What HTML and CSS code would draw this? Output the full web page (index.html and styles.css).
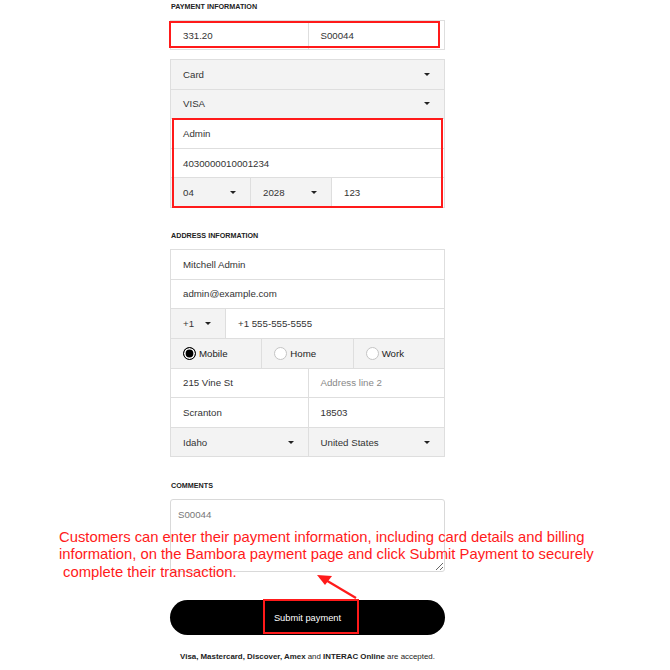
FILE: index.html
```html
<!DOCTYPE html>
<html lang="en">
<head>
<meta charset="utf-8">
<title>Bambora payment</title>
<link rel="stylesheet" href="styles.css">
</head>
<body>
<main class="page">
  <span class="stray-note">ing</span>

  <h6 class="section-title">PAYMENT INFORMATION</h6>
  <div class="group amount-group">
    <div class="row">
      <div class="cell half">331.20</div>
      <div class="cell half">S00044</div>
    </div>
    <span class="hl hl-amount"></span>
  </div>

  <div class="group card-group">
    <div class="row grey">
      <div class="cell select">Card<i class="caret"></i></div>
    </div>
    <div class="row grey">
      <div class="cell select">VISA<i class="caret"></i></div>
    </div>
    <div class="card-details">
      <div class="row">
        <div class="cell">Admin</div>
      </div>
      <div class="row">
        <div class="cell">4030000010001234</div>
      </div>
      <div class="row">
        <div class="cell select grey exp-month">04<i class="caret"></i></div>
        <div class="cell select grey exp-year">2028<i class="caret"></i></div>
        <div class="cell cvv">123</div>
      </div>
      <span class="hl hl-card"></span>
    </div>
  </div>

  <h6 class="section-title spaced">ADDRESS INFORMATION</h6>
  <div class="group address-group">
    <div class="row"><div class="cell">Mitchell Admin</div></div>
    <div class="row"><div class="cell">admin@example.com</div></div>
    <div class="row">
      <div class="cell select grey prefix">+1<i class="caret"></i></div>
      <div class="cell">+1 555-555-5555</div>
    </div>
    <div class="row grey">
      <div class="cell radio-cell"><span class="radio checked"></span>Mobile</div>
      <div class="cell radio-cell"><span class="radio"></span>Home</div>
      <div class="cell radio-cell"><span class="radio"></span>Work</div>
    </div>
    <div class="row">
      <div class="cell half">215 Vine St</div>
      <div class="cell half placeholder">Address line 2</div>
    </div>
    <div class="row">
      <div class="cell half">Scranton</div>
      <div class="cell half">18503</div>
    </div>
    <div class="row grey">
      <div class="cell half select">Idaho<i class="caret"></i></div>
      <div class="cell half select">United States<i class="caret"></i></div>
    </div>
  </div>

  <h6 class="section-title spaced-c">COMMENTS</h6>
  <textarea class="comments" placeholder="S00044"></textarea>

  <button class="submit" type="button">Submit payment<span class="hl hl-submit"></span></button>

  <p class="accepted"><b>Visa, Mastercard, Discover, Amex</b> and <b>INTERAC Online</b> are accepted.</p>

  <p class="annotation">Customers can enter their payment information, including card details and billing<br>information, on the Bambora payment page and click Submit Payment to securely<br>&nbsp;complete their transaction.</p>

  <svg class="arrow" width="60" height="40" viewBox="0 0 60 40" aria-hidden="true">
    <line x1="48" y1="31" x2="16" y2="12" stroke="#ff1a1a" stroke-width="2.2"/>
    <polygon points="9,8 24,9 17,18" fill="#ff1a1a"/>
  </svg>
</main>
</body>
</html>
```

FILE: styles.css
```css
* { box-sizing: border-box; }

html, body {
  margin: 0;
  padding: 0;
  background: #fff;
}

body {
  font-family: "Liberation Sans", Arial, sans-serif;
  color: #333;
}

.page {
  position: relative;
  width: 275px;
  margin-left: 170px;
  padding-top: 2px;
  min-height: 670px;
}

.stray-note {
  position: absolute;
  left: 112px;
  top: -16px;
  font-size: 14.8px;
  line-height: 17px;
  color: #ff1a1a;
}

.section-title {
  margin: 0 0 8px 1px;
  font-size: 7.2px;
  line-height: 10px;
  font-weight: bold;
  color: #222;
}
.section-title.spaced { margin-top: 23px; }
.section-title.spaced-c { margin-top: 24px; }

.group {
  position: relative;
  border: 1px solid #dedede;
  background: #fff;
}

.amount-group { margin-bottom: 9px; }

.row {
  display: flex;
  border-top: 1px solid #dedede;
}
.group > .row:first-child { border-top: 0; }
.card-group .row { height: 29.6px; }
.card-group > .row:first-child { height: 28.6px; }
.amount-group .row { height: 28px; }
.address-group .row { height: 29.65px; }
.address-group > .row:first-child { height: 28.65px; }

.grey { background: #f3f3f3; }

.cell {
  display: flex;
  align-items: center;
  flex: 1 1 0;
  min-width: 0;
  padding: 0 13px 0 12px;
  font-size: 9.7px;
  color: #333;
  white-space: nowrap;
}
.cell + .cell { border-left: 1px solid #dedede; }
.cell.half { flex: 0 0 50%; }
.cell.placeholder { color: #888; }

.select { justify-content: space-between; padding-right: 14px; }

.caret {
  display: block;
  width: 0;
  height: 0;
  border-left: 3.2px solid transparent;
  border-right: 3.2px solid transparent;
  border-top: 3.6px solid #222;
}

.exp-month { flex: 0 0 79px; }
.exp-year { flex: 0 0 81px; }
.prefix { flex: 0 0 54px; }

.radio-cell {
  justify-content: flex-start;
  gap: 3px;
  color: #222;
}
.radio {
  display: inline-block;
  width: 13px;
  height: 13px;
  border-radius: 50%;
  border: 1px solid #c4c4c4;
  background: #fff;
}
.radio.checked {
  border: 1.3px solid #000;
  background: #000;
  box-shadow: inset 0 0 0 1.6px #fff;
}

.card-details { position: relative; }

.hl {
  position: absolute;
  border: 2.2px solid #ff1a1a;
  pointer-events: none;
}
.hl-amount { left: -2px; top: 0; right: 4px; bottom: 1px; }
.hl-card { left: 1px; right: 1px; top: 0; bottom: -1px; }
.hl-submit { left: 93px; width: 96px; top: -1px; height: 35px; }

.comments {
  display: block;
  width: 275px;
  height: 73px;
  margin: 0;
  padding: 9px 7px;
  border: 1px solid #d9d9d9;
  border-radius: 3px;
  font-family: "Liberation Sans", Arial, sans-serif;
  font-size: 9.7px;
  color: #333;
  resize: vertical;
}
.comments::placeholder { color: #777; }

.submit {
  position: relative;
  display: block;
  width: 275px;
  height: 35px;
  margin-top: 28px;
  border: 0;
  border-radius: 18px;
  background: #000;
  color: #fff;
  font-family: "Liberation Sans", Arial, sans-serif;
  font-size: 9.3px;
  padding: 0;
}

.accepted {
  margin: 17px 0 0;
  text-align: center;
  font-size: 7.9px;
  line-height: 10px;
  color: #222;
}

.annotation {
  position: absolute;
  left: -111px;
  top: 529px;
  margin: 0;
  width: 560px;
  font-size: 14.8px;
  line-height: 17.4px;
  color: #ff1a1a;
  white-space: nowrap;
}

.arrow {
  position: absolute;
  left: 138px;
  top: 567px;
}
```
